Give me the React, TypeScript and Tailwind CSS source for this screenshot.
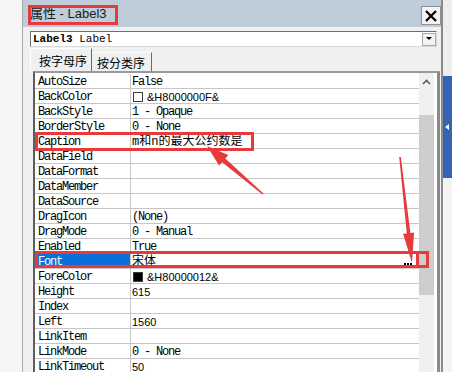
import React from "react";

type Row = {
	name: string;
	value?: string;
	kind?: "mono" | "sans" | "cjk";
	swatch?: "white" | "black";
	selected?: boolean;
};

const rows: Row[] = [
	{ name: "AutoSize", value: "False" },
	{ name: "BackColor", value: "&H8000000F&", kind: "sans", swatch: "white" },
	{ name: "BackStyle", value: "1 - Opaque" },
	{ name: "BorderStyle", value: "0 - None" },
	{ name: "Caption", value: "m和n的最大公约数是", kind: "cjk" },
	{ name: "DataField" },
	{ name: "DataFormat" },
	{ name: "DataMember" },
	{ name: "DataSource" },
	{ name: "DragIcon", value: "(None)" },
	{ name: "DragMode", value: "0 - Manual" },
	{ name: "Enabled", value: "True" },
	{ name: "Font", value: "宋体", kind: "cjk", selected: true },
	{ name: "ForeColor", value: "&H80000012&", kind: "sans", swatch: "black" },
	{ name: "Height", value: "615", kind: "sans" },
	{ name: "Index" },
	{ name: "Left", value: "1560", kind: "sans" },
	{ name: "LinkItem" },
	{ name: "LinkMode", value: "0 - None" },
	{ name: "LinkTimeout", value: "50", kind: "sans" },
];

const mono = "font-['Liberation_Mono',monospace] text-[12px] tracking-[-1.2px]";

const valueClass = (kind?: Row["kind"]) => {
	if (kind === "sans") return "font-['Liberation_Sans',sans-serif] text-[11px]";
	if (kind === "cjk") return "font-['Liberation_Mono','Noto_Sans_CJK_SC',monospace] text-[12px]";
	return mono;
};

const GridRow = ({ row }: { row: Row }) => (
	<div className="flex h-[15px] border-b border-[#c6c6c6]">
		<div
			className={`w-[96px] shrink-0 border-r border-[#c6c6c6] pl-[3px] leading-[16px] whitespace-nowrap ${mono} ${
				row.selected ? "bg-[#0a6fd6] text-white" : "text-black"
			}`}>
			{row.name}
		</div>
		<div className="flex-1 flex items-center pl-[1px] pt-[1px] text-black whitespace-nowrap">
			{row.swatch && (
				<span
					className={`ml-[1px] mr-[4px] w-[10px] h-[10px] border border-[#3c3c3c] ${
						row.swatch === "black" ? "bg-black" : "bg-white"
					}`}
				/>
			)}
			<span className={`leading-[14px] ${valueClass(row.kind)}`}>{row.value}</span>
			{row.selected && (
				<span className="ml-auto mr-[7px] flex gap-[1px] mt-[5px]">
					<span className="w-[2px] h-[2px] bg-black" />
					<span className="w-[2px] h-[2px] bg-black" />
					<span className="w-[2px] h-[2px] bg-black" />
				</span>
			)}
		</div>
	</div>
);

const Annotations = () => (
	<svg className="absolute inset-0 pointer-events-none" width="452" height="372" viewBox="0 0 452 372">
		<g fill="none" stroke="#e8393b" strokeWidth="3">
			<rect x="29.5" y="6.5" width="87" height="17" />
			<rect x="36.5" y="133.5" width="216" height="16" />
			<rect x="36.5" y="252.5" width="391" height="14" />
			<line x1="417.5" y1="252" x2="417.5" y2="267" />
		</g>
		<g fill="#e8393b">
			<polygon points="207,146 228.3,155 225.3,158.4 263.5,193.4 262.5,194.6 222.1,162.2 219.1,165.6" />
			<polygon points="412,263 414.1,232.6 410.4,233 400.8,156.9 399.2,157.1 406.8,233.4 403.1,233.8" />
		</g>
	</svg>
);

const App = () => {
	return (
		<div className="relative w-[452px] h-[372px] overflow-hidden flex bg-[#f0f0f0]">
			{/* left desktop strip */}
			<div className="w-[23px] shrink-0 bg-[#f6f6f6] border-r border-[#a9a9a9]" />

			{/* properties window */}
			<div className="w-[418px] shrink-0 flex flex-col bg-[#f0f0f0]">
				<div className="h-[27px] shrink-0 flex bg-[#bfcddb]">
					<span className="pl-[7px] self-center text-[13px] text-[#1a1a1a] font-['Liberation_Sans','Noto_Sans_CJK_SC',sans-serif]">
						属性 - Label3
					</span>
					<div className="ml-auto mt-[6px] w-[20px] h-[19px] bg-[#f3f3f3] border border-[#8f8f8f] flex items-center justify-center">
						<svg width="12" height="12" viewBox="0 0 12 12">
							<path d="M1 1 L11 11 M11 1 L1 11" stroke="#000" strokeWidth="2.2" />
						</svg>
					</div>
				</div>

				<div className="shrink-0 mt-[4px] ml-[7px] w-[407px] h-[16px] flex items-center bg-white border border-t-[#6e6e6e] border-l-[#6e6e6e] border-r-[#d8d8d8] border-b-[#d8d8d8]">
					<span className="pl-[2px] pt-[1px] font-['Liberation_Mono',monospace] text-[11px] text-black">
						<b>Label3</b> Label
					</span>
					<div className="ml-auto w-[14px] h-[13px] bg-[#f2f2f2] border border-[#a8a8a8] flex items-center justify-center">
						<svg width="6" height="4" viewBox="0 0 6 4">
							<path d="M0 0 H6 L3 3 Z" fill="#000" />
						</svg>
					</div>
				</div>

				<div className="shrink-0 h-[24px] ml-[7px] flex items-end font-['Noto_Sans_CJK_SC',sans-serif] text-[12px] text-black">
					<div className="w-[62px] h-[23px] pl-[8px] pt-[2px] flex items-center border-l border-t border-white border-r border-r-[#6a6a6a]">
						按字母序
					</div>
					<div className="w-[60px] h-[19px] pl-[5px] pt-[1px] flex items-center border-t border-t-[#fafafa] border-r border-r-[#6a6a6a]">
						按分类序
					</div>
				</div>

				<div className="ml-[10px] w-[407px] flex-1 min-h-0 overflow-hidden flex bg-white border-l-2 border-t-2 border-r-[3px] border-l-[#5e5e5e] border-t-[#9a9a9a] border-r-[#8a8a8a]">
					<div className="w-[384px] shrink-0 pt-[1px]">
						{rows.map((r) => (
							<GridRow key={r.name} row={r} />
						))}
					</div>
					<div className="w-[15px] shrink-0 flex flex-col bg-[#f0f0f0]">
						<div className="h-[17px] shrink-0 flex items-center justify-center">
							<svg width="9" height="6" viewBox="0 0 9 6">
								<path d="M1 5 L4.5 1.5 L8 5" stroke="#5a5a5a" strokeWidth="1.6" fill="none" />
							</svg>
						</div>
						<div className="h-[25px] shrink-0" />
						<div className="h-[180px] shrink-0 bg-[#cdcdcd]" />
					</div>
					<div className="w-[3px] shrink-0 bg-white" />
				</div>
			</div>

			{/* right edge with docked blue panel */}
			<div className="flex-1 flex border-l-2 border-[#8a8a8a]">
				<div className="flex-1 flex flex-col">
					<div className="h-[76px] shrink-0 bg-[#eeeeee]" />
					<div className="h-[102px] shrink-0 bg-[#3465b3] flex items-center pl-[2px]">
						<svg width="4" height="6" viewBox="0 0 4 6">
							<path d="M4 0 V6 L0 3 Z" fill="#fff" />
						</svg>
					</div>
					<div className="flex-1 bg-[#f4f4f4]" />
				</div>
			</div>

			<Annotations />
		</div>
	);
};

export default App;
